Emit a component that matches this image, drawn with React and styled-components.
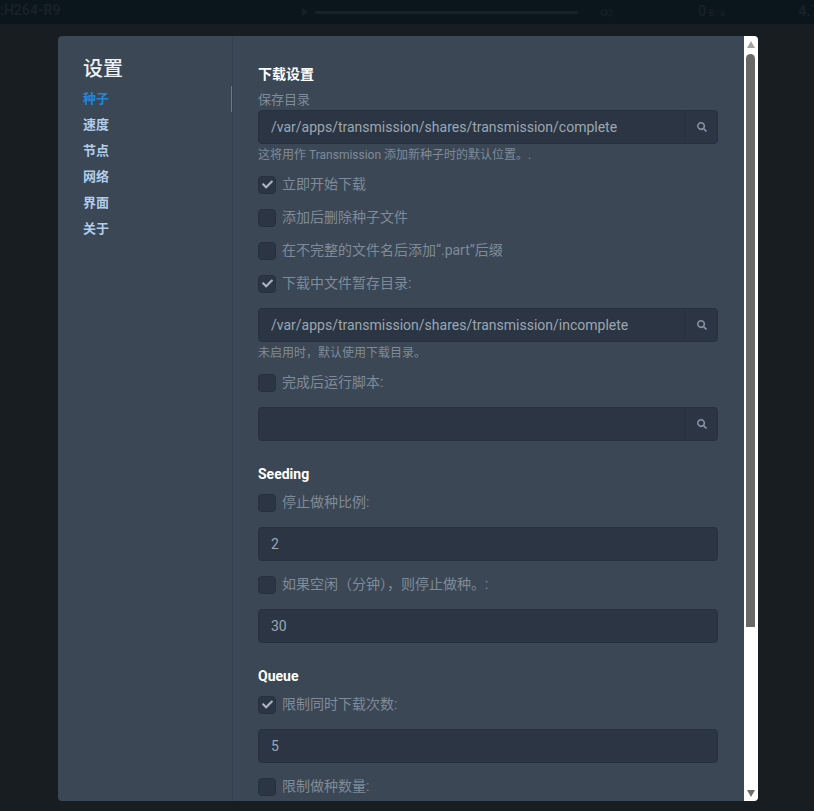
import { createGlobalStyle } from "styled-components";
import styled from "styled-components";
import { FaSearch, FaCheck } from "react-icons/fa";

const Global = createGlobalStyle`
  html, body {
    margin: 0;
    padding: 0;
    height: 811px;
    overflow: hidden;
    background: #181d21;
    font-family: Roboto, "Noto Sans CJK SC", sans-serif;
  }
`;

const Page = styled.div`
  width: 814px;
  height: 811px;
  overflow: hidden;
`;

const TopBar = styled.div`
  height: 24px;
  background: #0b151c;
  color: #182128;
  display: flex;
  align-items: center;
  overflow: hidden;
  white-space: nowrap;
`;

const TorrentName = styled.div`
  width: 302px;
  flex: none;
  font-size: 14px;
  font-weight: 700;
  margin-top: -5px;
`;

const PlayMark = styled.div`
  flex: none;
  width: 0;
  height: 0;
  border-left: 6px solid #182128;
  border-top: 4px solid transparent;
  border-bottom: 4px solid transparent;
  margin-right: 7px;
`;

const Progress = styled.div`
  flex: none;
  width: 263px;
  height: 3px;
  background: #182128;
  margin-right: 22px;
`;

const Eta = styled.div`
  flex: none;
  width: 98px;
  font-size: 12px;
`;

const Speed = styled.div`
  flex: none;
  width: 100px;
  font-size: 14px;
  font-weight: 500;
  margin-top: -3px;

  small {
    font-size: 9px;
    letter-spacing: 1px;
    margin-left: 3px;
  }
`;

const Ratio = styled.div`
  flex: none;
  font-size: 15px;
  font-weight: 700;
  margin-top: -3px;
`;

const Modal = styled.div`
  width: 700px;
  height: 765px;
  margin: 12px 0 0 58px;
  display: flex;
  background: #3b4755;
  border-radius: 4px;
  overflow: hidden;
`;

const Sidebar = styled.nav`
  flex: none;
  width: 175px;
  height: 100%;
  box-sizing: border-box;
  border-right: 1px solid #344050;
  padding: 19px 0 0 25px;
`;

const SideTitle = styled.div`
  color: #eef3f7;
  font-size: 20px;
  line-height: 28px;
  font-weight: 500;
  margin-bottom: 2.5px;
`;

const NavItem = styled.div`
  position: relative;
  height: 26.2px;
  line-height: 26.2px;
  font-size: 13px;
  font-weight: 700;
  color: ${(p) => (p.$active ? "#1f86e0" : "#b0cdec")};

  &::after {
    content: "";
    display: ${(p) => (p.$active ? "block" : "none")};
    position: absolute;
    right: 0;
    top: 0;
    width: 1px;
    height: 100%;
    background: #3d85c6;
  }
`;

const Content = styled.div`
  flex: 1;
  min-width: 0;
  height: 100%;
  box-sizing: border-box;
  padding: 28px 26px 0 25px;
  overflow: hidden;
`;

const Heading = styled.div`
  color: #fff;
  font-size: 14px;
  line-height: 20px;
  font-weight: 700;
  margin-top: ${(p) => p.$top || 0}px;
  margin-bottom: 2px;
`;

const FieldLabel = styled.div`
  color: #7f8b98;
  font-size: 13px;
  line-height: 18px;
  margin-top: 7px;
  margin-bottom: 1px;
`;

const InputGroup = styled.div`
  display: flex;
  height: 34px;
  box-sizing: border-box;
  margin-top: ${(p) => p.$top || 0}px;
  background: #2b3543;
  border: 1px solid #263140;
  border-radius: 4px;
`;

const TextInput = styled.input`
  flex: 1;
  min-width: 0;
  background: transparent;
  border: 0;
  outline: 0;
  padding: 0 12px;
  color: #9ca7b3;
  font-family: inherit;
  font-size: 14px;
`;

const SearchAddon = styled.div`
  flex: none;
  width: 33px;
  padding-left: 1px;
  box-sizing: border-box;
  display: flex;
  align-items: center;
  justify-content: center;
  border-left: 1px solid #263140;
  color: #8494a3;
  font-size: 10px;
`;

const Helper = styled.div`
  color: #7f8b98;
  font-size: 12px;
  line-height: 18px;
  margin-top: 2px;
  margin-bottom: ${(p) => p.$bottom || 4}px;
`;

const CheckRow = styled.div`
  display: flex;
  align-items: center;
  height: 33px;
  margin-top: ${(p) => p.$top || 0}px;
  color: #7f8b98;
  font-size: 14px;
`;

const CheckText = styled.span`
  margin-top: -3px;
`;

const Box = styled.span`
  flex: none;
  width: 18px;
  height: 18px;
  box-sizing: border-box;
  margin-right: 6px;
  display: flex;
  align-items: center;
  justify-content: center;
  background: #2b3543;
  border: 1px solid #263140;
  border-radius: 4px;
  color: #a9b4bf;
  font-size: 11px;
`;

const Track = styled.div`
  flex: none;
  width: 14px;
  height: 100%;
  box-sizing: border-box;
  background: #fff;
  padding: 5px 3px 4px 2px;
  display: flex;
  flex-direction: column;
  align-items: center;
`;

const Arrow = styled.div`
  flex: none;
  width: 0;
  height: 0;
  border-left: 4.5px solid transparent;
  border-right: 4.5px solid transparent;
  ${(p) =>
    p.$down
      ? "border-top: 7px solid #6e6e6e; margin-top: auto;"
      : "border-bottom: 7px solid #a3a3a3; margin-bottom: 6px;"}
`;

const Thumb = styled.div`
  flex: none;
  width: 9px;
  height: 573px;
  background: #686868;
  border-radius: 5px 5px 0 0;
`;

const Check = ({ checked, children, top }) => (
  <CheckRow $top={top}>
    <Box>{checked && <FaCheck />}</Box>
    <CheckText>{children}</CheckText>
  </CheckRow>
);

const PathInput = ({ value, top }) => (
  <InputGroup $top={top}>
    <TextInput readOnly value={value} />
    <SearchAddon>
      <FaSearch />
    </SearchAddon>
  </InputGroup>
);

const NumberInput = ({ value, top }) => (
  <InputGroup $top={top}>
    <TextInput readOnly value={value} />
  </InputGroup>
);

const navItems = ["种子", "速度", "节点", "网络", "界面", "关于"];

export default function App() {
  return (
    <Page>
      <Global />
      <TopBar>
        <TorrentName>:H264-R9</TorrentName>
        <PlayMark />
        <Progress />
        <Eta>∞</Eta>
        <Speed>
          0<small>B/s</small>
        </Speed>
        <Ratio>4.7</Ratio>
      </TopBar>
      <Modal>
        <Sidebar>
          <SideTitle>设置</SideTitle>
          {navItems.map((item, i) => (
            <NavItem key={item} $active={i === 0}>
              {item}
            </NavItem>
          ))}
        </Sidebar>
        <Content>
          <Heading>下载设置</Heading>
          <FieldLabel>保存目录</FieldLabel>
          <PathInput value="/var/apps/transmission/shares/transmission/complete" />
          <Helper>这将用作 Transmission 添加新种子时的默认位置。.</Helper>
          <Check checked>立即开始下载</Check>
          <Check>添加后删除种子文件</Check>
          <Check>在不完整的文件名后添加“.part”后缀</Check>
          <Check checked>下载中文件暂存目录:</Check>
          <PathInput top={8} value="/var/apps/transmission/shares/transmission/incomplete" />
          <Helper>未启用时，默认使用下载目录。</Helper>
          <Check>完成后运行脚本:</Check>
          <PathInput top={8} value="" />
          <Heading $top={23}>Seeding</Heading>
          <Check>停止做种比例:</Check>
          <NumberInput top={8} value="2" />
          <Check top={7}>如果空闲（分钟），则停止做种。:</Check>
          <NumberInput top={8} value="30" />
          <Heading $top={23}>Queue</Heading>
          <Check checked>限制同时下载次数:</Check>
          <NumberInput top={8} value="5" />
          <Check top={7}>限制做种数量:</Check>
        </Content>
        <Track>
          <Arrow />
          <Thumb />
          <Arrow $down />
        </Track>
      </Modal>
    </Page>
  );
}
